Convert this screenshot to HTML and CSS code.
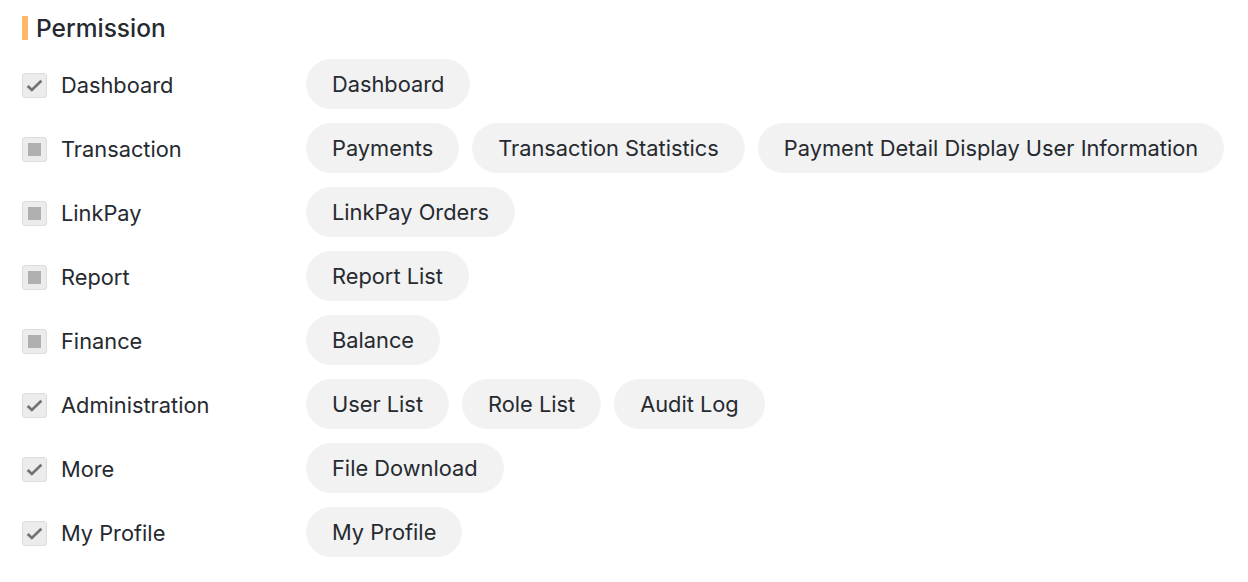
FILE: index.html
```html
<!DOCTYPE html>
<html lang="en">
<head>
  <meta charset="UTF-8">
  <title>Permission</title>
  <link rel="stylesheet" href="styles.css">
</head>
<body>
  <section class="permission">
    <h2 class="section-title">Permission</h2>

    <div class="perm-list">
      <div class="perm-row">
        <label class="perm-group">
          <span class="check checked"><svg viewBox="0 0 18 18"><path d="M2.5 9.5l4 3.8 9-8.8"/></svg></span>
          Dashboard
        </label>
        <div class="perm-tags">
          <span class="tag">Dashboard</span>
        </div>
      </div>

      <div class="perm-row">
        <label class="perm-group">
          <span class="check partial"></span>
          Transaction
        </label>
        <div class="perm-tags">
          <span class="tag">Payments</span>
          <span class="tag">Transaction Statistics</span>
          <span class="tag">Payment Detail Display User Information</span>
        </div>
      </div>

      <div class="perm-row">
        <label class="perm-group">
          <span class="check partial"></span>
          LinkPay
        </label>
        <div class="perm-tags">
          <span class="tag">LinkPay Orders</span>
        </div>
      </div>

      <div class="perm-row">
        <label class="perm-group">
          <span class="check partial"></span>
          Report
        </label>
        <div class="perm-tags">
          <span class="tag">Report List</span>
        </div>
      </div>

      <div class="perm-row">
        <label class="perm-group">
          <span class="check partial"></span>
          Finance
        </label>
        <div class="perm-tags">
          <span class="tag">Balance</span>
        </div>
      </div>

      <div class="perm-row">
        <label class="perm-group">
          <span class="check checked"><svg viewBox="0 0 18 18"><path d="M2.5 9.5l4 3.8 9-8.8"/></svg></span>
          Administration
        </label>
        <div class="perm-tags">
          <span class="tag">User List</span>
          <span class="tag">Role List</span>
          <span class="tag">Audit Log</span>
        </div>
      </div>

      <div class="perm-row">
        <label class="perm-group">
          <span class="check checked"><svg viewBox="0 0 18 18"><path d="M2.5 9.5l4 3.8 9-8.8"/></svg></span>
          More
        </label>
        <div class="perm-tags">
          <span class="tag">File Download</span>
        </div>
      </div>

      <div class="perm-row">
        <label class="perm-group">
          <span class="check checked"><svg viewBox="0 0 18 18"><path d="M2.5 9.5l4 3.8 9-8.8"/></svg></span>
          My Profile
        </label>
        <div class="perm-tags">
          <span class="tag">My Profile</span>
        </div>
      </div>
    </div>
  </section>
</body>
</html>
```

FILE: styles.css
```css
* {
  box-sizing: border-box;
  margin: 0;
  padding: 0;
}

body {
  background: #ffffff;
  font-family: Inter, 'Noto Sans', sans-serif;
  color: #262a30;
  padding: 14px 22px;
}

.section-title {
  display: flex;
  align-items: center;
  gap: 8px;
  font-size: 24.5px;
  font-weight: 500;
  line-height: 28px;
  color: #262a30;
}

.section-title::before {
  content: '';
  width: 6px;
  height: 24px;
  background: #fdb765;
  border-radius: 1px;
}

.perm-list {
  display: flex;
  flex-direction: column;
  gap: 14px;
  margin-top: 17px;
}

.perm-row {
  display: flex;
  align-items: flex-start;
}

.perm-group {
  width: 284px;
  flex-shrink: 0;
  height: 50px;
  display: flex;
  align-items: center;
  gap: 14px;
  font-size: 21.8px;
  padding-top: 2px;
}

.check {
  width: 25px;
  height: 25px;
  border: 1px solid #dcdcdc;
  border-radius: 3px;
  background: #ececec;
  display: flex;
  align-items: center;
  justify-content: center;
}

.check svg {
  width: 19px;
  height: 19px;
  fill: none;
  stroke: #727272;
  stroke-width: 2.5;
}

.check.partial::after {
  content: '';
  width: 13px;
  height: 13px;
  background: #b0b0b0;
}

.perm-tags {
  display: flex;
  flex-wrap: nowrap;
  gap: 13px;
}

.tag {
  height: 50px;
  display: inline-flex;
  align-items: center;
  flex-shrink: 0;
  white-space: nowrap;
  padding: 0 26px;
  border-radius: 25px;
  background: #f2f2f2;
  font-size: 21.8px;
  color: #262a30;
}
```
